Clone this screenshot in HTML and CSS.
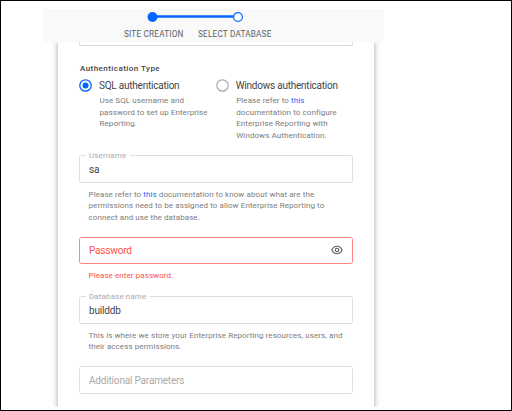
FILE: index.html
```html
<!DOCTYPE html>
<html lang="en">
<head>
<meta charset="utf-8">
<title>Select Database</title>
<link rel="stylesheet" href="styles.css">
</head>
<body>
<main class="page">
  <header class="stepper">
    <svg class="track" width="98" height="12" viewBox="0 0 98 12">
      <path d="M6 5.500H88" stroke="#0565ff" stroke-width="2.400"/>
      <circle cx="5.500" cy="6" r="5" fill="#0565ff"/>
      <circle cx="91" cy="6" r="4.400" fill="#fff" stroke="#0565ff" stroke-width="1.200"/>
    </svg>
    <div class="steps"><span class="step-one">SITE CREATION</span><span class="step-two">SELECT DATABASE</span></div>
  </header>
  <div class="viewport">
    <section class="card">
      <div class="field previous"></div>
      <h1 class="heading">Authentication Type</h1>
      <div class="options">
        <div class="option">
          <svg class="radio" width="13" height="13" viewBox="0 0 13 13"><circle cx="6.500" cy="6.500" r="5.700" fill="none" stroke="#0565ff" stroke-width="1.300"/><circle cx="6.500" cy="6.500" r="3" fill="#0565ff"/></svg>
          <div><div class="name">SQL authentication</div>
          <p class="help">Use SQL username and<br>password to set up Enterprise<br>Reporting.</p></div>
        </div>
        <div class="option">
          <svg class="radio" width="13" height="13" viewBox="0 0 13 13"><circle cx="6.500" cy="6.500" r="5.700" fill="none" stroke="#aaa" stroke-width="1.200"/></svg>
          <div><div class="name">Windows authentication</div>
          <p class="help">Please refer to <a>this</a><br>documentation to configure<br>Enterprise Reporting with<br>Windows Authentication.</p></div>
        </div>
      </div>
      <div class="group username">
        <div class="field"><span class="label">Username</span><span class="value">sa</span></div>
        <p class="help">Please refer to <a>this</a> documentation to know about what are the<br>permissions need to be assigned to allow Enterprise Reporting to<br>connect and use the database.</p>
      </div>
      <div class="group password">
        <div class="field error"><span class="value">Password</span>
          <svg class="eye" width="12" height="10" viewBox="0 0 12 10" fill="none" stroke="#5c5c5c" stroke-width="1.100">
            <path d="M.8 5C2 2.600 3.800 1.300 6 1.300S10 2.600 11.200 5C10 7.400 8.200 8.700 6 8.700S2 7.400.8 5Z"/>
            <circle cx="6" cy="5" r="1.700"/>
          </svg>
        </div>
        <p class="help message">Please enter password.</p>
      </div>
      <div class="group database">
        <div class="field"><span class="label">Database name</span><span class="value">builddb</span></div>
        <p class="help">This is where we store your Enterprise Reporting resources, users, and<br>their access permissions.</p>
      </div>
      <div class="field"><span class="value placeholder">Additional Parameters</span></div>
    </section>
  </div>
</main>
</body>
</html>
```

FILE: styles.css
```css
* { box-sizing: border-box; }
body { margin: 0; background: #fff; font-family: Roboto, sans-serif; }
.page { width: 512px; height: 411px; border: 1px solid #000; padding: 8px 0 0 42px; overflow: hidden; }
.stepper { width: 341px; height: 33px; background: #f9f9f9; padding-top: 2px; }
.track { display: block; margin-left: 104px; }
.steps { display: flex; padding-left: 81px; margin-top: 5px; font-size: 8.200px; line-height: 12px; letter-spacing: .2px; color: #606060; white-space: nowrap; }
.step-one { width: 74px; }
.viewport { height: 365px; width: 341px; padding-left: 15px; overflow: hidden; }
.card { width: 316px; height: 366px; padding: 0 21px; box-shadow: 0 0 6px rgba(0,0,0,.38); }
.field { position: relative; width: 274px; height: 27.500px; border: 1px solid #dedede; border-radius: 2.500px; display: flex; align-items: center; padding: 2px 9px 0; }
.previous { height: 4px; border-top: 0; border-radius: 0 0 2.500px 2.500px; }
.heading { margin: 16.500px 0 0 1px; font-size: 8px; line-height: 12px; font-weight: 500; letter-spacing: .45px; color: #444; }
.options { display: flex; height: 80.500px; padding-top: 3.500px; }
.option { display: flex; width: 136.700px; gap: 7px; white-space: nowrap; }
.radio { flex: none; margin-top: 1px; }
.name { font-size: 10px; letter-spacing: -.23px; line-height: 15px; color: #444; }
.option .help { margin-left: .5px; }
.help { margin: 2px 0 0; font-size: 8px; letter-spacing: .08px; line-height: 11.600px; color: #7c7c7c; white-space: nowrap; }
.help a { color: #2866f5; }
.group .help { margin: 6px 0 0 9.500px; }
.username { height: 81.500px; }
.password { height: 59.500px; }
.database { height: 70px; }
.label { position: absolute; left: 6px; top: -6px; padding: 0 4px 0 3px; background: #fff; color: #aaa; font-size: 8px; letter-spacing: .12px; line-height: 11px; }
.value { font-size: 10px; letter-spacing: -.18px; line-height: 14px; color: #444; }
.error { border-color: #ff8580; }
.error .value, .group .message { color: #fa544b; }
.placeholder { color: #aaa; }
.eye { margin-left: auto; margin-right: .500px; margin-top: -3px; }
```
